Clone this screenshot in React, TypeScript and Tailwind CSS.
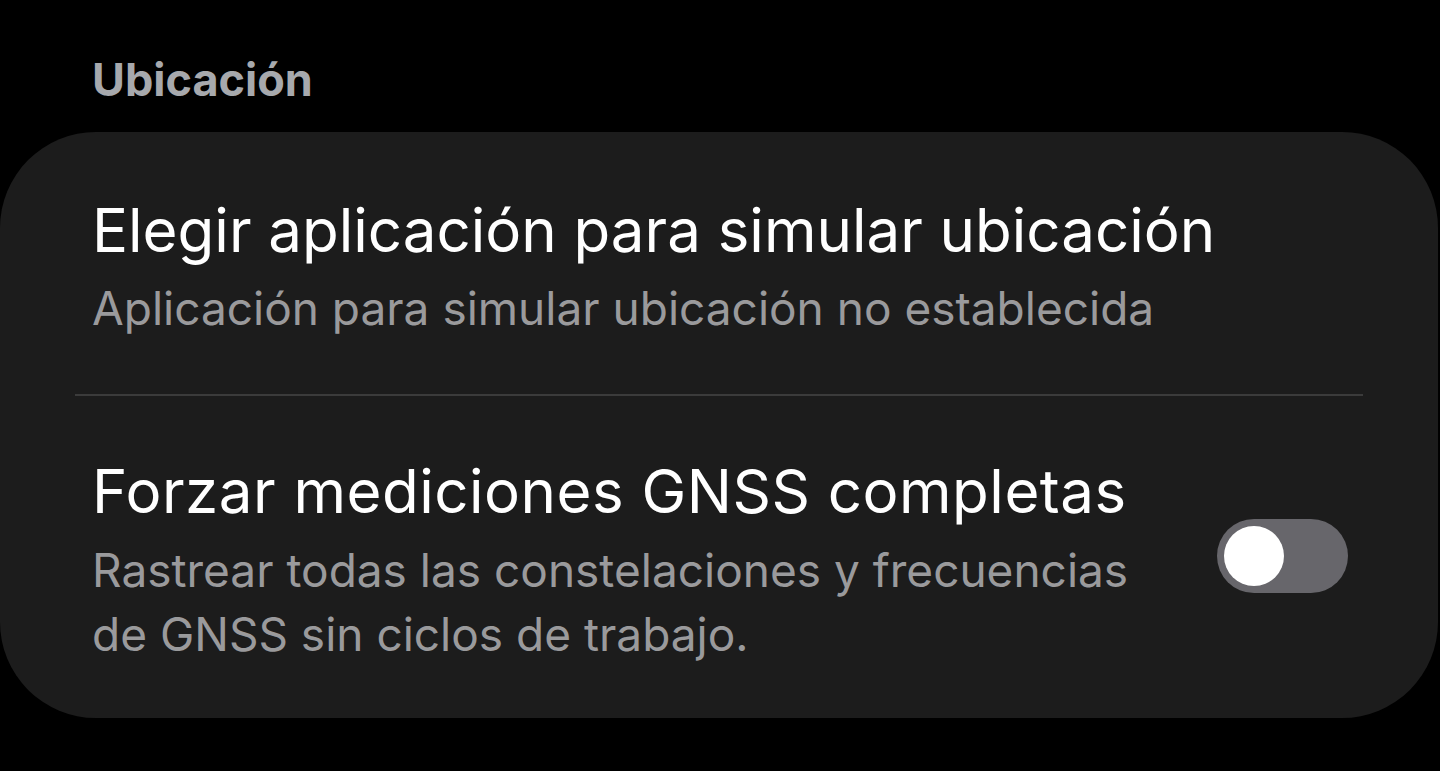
import React from "react";

export default function App() {
  return (
    <div className="w-[1440px] h-[771px] bg-black overflow-hidden" style={{ fontFamily: "Inter, 'Noto Sans', sans-serif" }}>
      <div className="pl-[92px] pt-[52px] h-[132px]">
        <div className="text-[45px] leading-[56px] font-bold text-[#a7a9ad]">Ubicación</div>
      </div>
      <div className="w-[1438px] h-[586px] bg-[#1c1c1c] rounded-[96px] flex flex-col">
        <div className="pl-[92px] pr-[76px] pt-[62px] h-[262px]">
          <div className="text-[60px] leading-[72px] text-white">Elegir aplicación para simular ubicación</div>
          <div className="text-[46px] leading-[64px] text-[#9a9a9c] mt-[10px]">Aplicación para simular ubicación no establecida</div>
        </div>
        <div className="mx-[75px] h-[2px] bg-[#3b3b3b]" />
        <div className="pl-[92px] pr-[90px] pt-[59px] flex items-start justify-between">
          <div className="w-[1080px]">
            <div className="text-[60px] leading-[72px] text-white tracking-[0.5px] whitespace-nowrap">Forzar mediciones GNSS completas</div>
            <div className="text-[46px] leading-[64px] text-[#9a9a9c] mt-[11px]">Rastrear todas las constelaciones y frecuencias de GNSS sin ciclos de trabajo.</div>
          </div>
          <div className="mt-[64px] w-[131px] h-[74px] rounded-full bg-[#67666b] flex items-center pl-[7px]">
            <div className="w-[60px] h-[60px] rounded-full bg-white" />
          </div>
        </div>
      </div>
    </div>
  );
}
